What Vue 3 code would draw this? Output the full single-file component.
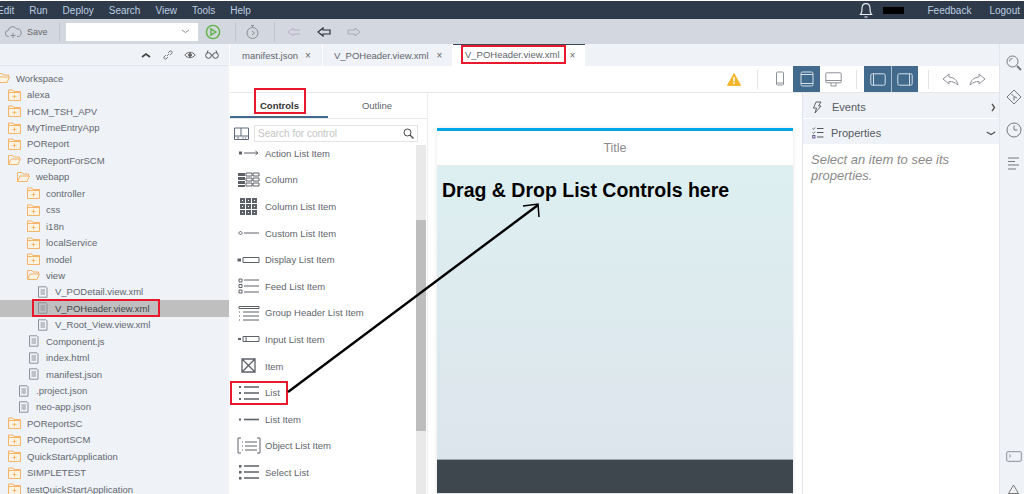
<template>
  <div class="ide">
    <div class="menubar">
      <span v-for="m in menus" :key="m" class="menu-item">{{ m }}</span>
      <div class="menu-right">
        <svg class="bell" width="14" height="16" viewBox="0 0 14 16" fill="none" stroke="#e8eef5" stroke-width="1.1">
          <path d="M1.5 12.5c1.5-1.5 1.5-3 1.5-6C3 3.5 4.8 1.6 7 1.6s4 1.9 4 4.9c0 3 0 4.5 1.5 6z" />
          <path d="M5.5 15h3" />
        </svg>
        <span class="redacted"></span>
        <span class="feedback">Feedback</span>
        <span class="logout">Logout</span>
      </div>
    </div>

    <div class="toolbar">
      <svg class="save-icon" width="17" height="14" viewBox="0 0 17 14" fill="none" stroke="#8a8f96">
        <path d="M4 11.5H3.5a3 3 0 0 1-.3-6A4.5 4.5 0 0 1 11.6 4a3.8 3.8 0 0 1 1.4 7.5h-1" />
        <path d="M8 8v5M5.5 10.5h5" />
      </svg>
      <span class="save-label">Save</span>
      <span class="tool-sep first"></span>
      <div class="run-select">
        <svg width="9" height="5" viewBox="0 0 9 5" fill="none" stroke="#8a8f96"><path d="M1 1l3.5 2.5L8 1" /></svg>
      </div>
      <svg class="run-btn" width="16" height="16" viewBox="0 0 16 16" fill="none" stroke="#5fb246" stroke-width="1.4">
        <circle cx="8" cy="8" r="6.6" />
        <path d="M6 4.8l4.8 3.2L6 11.2z" />
      </svg>
      <span class="tool-sep"></span>
      <svg class="timer" width="14" height="16" viewBox="0 0 14 16" fill="none" stroke="#8a8f96">
        <circle cx="6.5" cy="9" r="5.5" />
        <path d="M5 1.5h3M6.5 1.5v2M6 7l2.5 2-2.5 2" />
      </svg>
      <span class="tool-sep"></span>
      <svg class="nav a" width="14" height="10" viewBox="0 0 14 10" fill="none" stroke="#bcaecb"><path d="M6 1L1 5l5 4V7h7M6 1v2h7" /></svg>
      <svg class="nav b" width="14" height="10" viewBox="0 0 14 10" fill="none" stroke="#2b2f36" stroke-width="1.2"><path d="M6 1L1 5l5 4V7h7V3H6z" /></svg>
      <svg class="nav c" width="14" height="10" viewBox="0 0 14 10" fill="none" stroke="#a9adb5"><path d="M8 1l5 4-5 4V7H1V3h7z" /></svg>
    </div>

    <div class="main">
      <aside class="workspace">
        <div class="workspace-head">
          <svg width="10" height="6" viewBox="0 0 10 6"><path d="M1 5l4-3 4 3" fill="none" stroke="#444" stroke-width="1.6" /></svg>
          <svg class="gap-a" width="12" height="12" viewBox="0 0 12 12" fill="none" stroke="#777"><path d="M5 7l2-2M4 6L2 8a1.5 1.5 0 0 0 2 2l2-2M8 6l2-2a1.5 1.5 0 0 0-2-2L6 4" /></svg>
          <svg class="gap-b" width="12" height="8" viewBox="0 0 12 8" fill="none" stroke="#666"><path d="M.8 4C3.5.4 8.500.4 11.200 4 8.500 7.600 3.500 7.600.8 4z" /><circle cx="6" cy="4" r="1.500" fill="#666" /></svg>
          <svg class="gap-c" width="14" height="9" viewBox="0 0 14 9" fill="none" stroke="#555"><circle cx="3.500" cy="5.500" r="2.800" /><circle cx="10.500" cy="5.500" r="2.800" /><path d="M6.300 5h1.400M2 3l1-2.500M12 3l-1-2.500" /></svg>
        </div>
        <div class="tree">
          <div v-for="row in tree" :key="row.name + row.x" class="tree-row" :class="{ selected: row.selected }">
            <span class="tree-node" :class="{ marked: row.selected }" :style="{ marginLeft: row.x + 'px' }">
              <svg v-if="row.type === 'closed'" class="node-icon" width="13" height="12" viewBox="0 0 13 12" fill="#fdf3e3" stroke="#f5b469">
                <path d="M.5 11.500V1h4.500l1 1.500h6.500v9z" />
                <path d="M.5 3.500h12" fill="none" />
                <path d="M4.500 7.500h4M6.500 5.500v4" fill="none" stroke-width=".9" />
              </svg>
              <svg v-else-if="row.type === 'open'" class="node-icon" width="13" height="12" viewBox="0 0 13 12" fill="none" stroke="#f5b469">
                <path d="M.5 10.500V1.500h4.500l1 1.500h5.500v2" />
                <path d="M.5 10.500l2.500-5.500h9.500l-2.500 5.500z" fill="#fdf3e3" />
              </svg>
              <svg v-else class="node-icon" width="13" height="12" viewBox="0 0 13 12" fill="none" stroke="#8d9197">
                <path d="M2.500.8h7.500l1 1v9.400H2.500z" />
                <path d="M4.500 4h4.500M4.500 6h4.500M4.500 8h4.500" />
              </svg>
              <span class="node-name">{{ row.name }}</span>
            </span>
          </div>
        </div>
      </aside>

      <section class="editor">
        <div class="tabs">
          <div v-for="tab in tabs" :key="tab.id" class="tab" :class="{ active: tab.active }">
            <span class="tab-name" :class="{ marked: tab.active }">{{ tab.name }}</span>
            <span class="tab-close">×</span>
          </div>
        </div>

        <div class="layout-bar">
          <svg class="warn" width="14" height="13" viewBox="0 0 14 13">
            <path d="M7 .6l6.600 11.800H.4z" fill="#f2b62c" stroke="#f2b62c" stroke-linejoin="round" />
            <path d="M7 4v4.500M7 9.500v1.500" stroke="#fff" stroke-width="1.500" />
          </svg>
          <span class="bar-sep"></span>
          <div class="bar-btn">
            <svg width="10" height="16" viewBox="0 0 10 16" fill="none" stroke="#8d9197"><rect x="1.500" y="1" width="7" height="13" rx="1" /><path d="M1.500 12h7" /></svg>
          </div>
          <div class="bar-btn on">
            <svg width="14" height="16" viewBox="0 0 14 16" fill="none" stroke="#d4e0ea"><rect x="1" y="1" width="12" height="14" rx="1.500" /><path d="M1 3.500h12M1 12.500h12" /></svg>
          </div>
          <div class="bar-btn">
            <svg width="17" height="15" viewBox="0 0 17 15" fill="none" stroke="#8d9197"><rect x=".8" y=".8" width="15.400" height="10" rx="1" /><path d="M.8 8.500h15.400M6 11v3h5v-3" /></svg>
          </div>
          <span class="bar-sep"></span>
          <div class="bar-btn on">
            <svg width="16" height="13" viewBox="0 0 16 13" fill="none" stroke="#d4e0ea"><rect x=".8" y=".8" width="14.400" height="11.400" rx="1.500" /><path d="M3.500.8v11.400" /></svg>
          </div>
          <div class="bar-btn on">
            <svg width="16" height="13" viewBox="0 0 16 13" fill="none" stroke="#d4e0ea"><rect x=".8" y=".8" width="14.400" height="11.400" rx="1.500" /><path d="M12.500.8v11.400" /></svg>
          </div>
          <span class="bar-sep last"></span>
          <svg class="undo" width="17" height="13" viewBox="0 0 17 13" fill="none" stroke="#8d9197"><path d="M7 1L1 6l6 5V8.500c3.500 0 6 .8 9 3.500-.8-4.500-3.500-7.500-9-8z" /></svg>
          <svg class="redo" width="17" height="13" viewBox="0 0 17 13" fill="none" stroke="#8d9197"><path d="M10 1l6 5-6 5V8.500c-3.500 0-6 .8-9 3.500.8-4.500 3.500-7.500 9-8z" /></svg>
        </div>

        <div class="panes">
          <div class="palette">
            <div class="palette-tabs">
              <div class="palette-tab current"><span class="marked controls-mark">Controls</span></div>
              <div class="palette-tab">Outline</div>
            </div>
            <div class="search-row">
              <svg width="15" height="13" viewBox="0 0 15 13" fill="none" stroke="#5e6a78"><path d="M.5 9V1h6.500v8M7 1h7.500v8M.5 9h14v3.500H.5z" /><path d="M3 10l1 1.500L5 10M9 10v2M11 10l1 2" stroke-width=".7" /></svg>
              <div class="search-box">
                <span class="search-hint">Search for control</span>
                <svg width="11" height="11" viewBox="0 0 11 11" fill="none" stroke="#444"><circle cx="4.500" cy="4.500" r="3.500" /><path d="M7 7l3.500 3.500" stroke-width="1.300" /></svg>
              </div>
            </div>
            <div class="control-area">
              <ul class="control-list">
                <li v-for="c in controls" :key="c.name" class="control">
                  <span class="control-inner" :class="{ marked: c.name === 'List' }">
                    <svg class="control-icon" width="24" height="18" viewBox="0 0 24 18" fill="none" stroke="#5c6168">
                      <path :d="c.d" :stroke-width="c.w || 1" />
                      <path v-if="c.fill" :d="c.fill" fill="#5c6168" stroke="none" />
                    </svg>
                    <span class="control-name">{{ c.name }}</span>
                  </span>
                </li>
              </ul>
              <div class="scroll-track"><div class="scroll-thumb"></div></div>
            </div>
          </div>

          <div class="canvas">
            <div class="phone">
              <div class="phone-title">Title</div>
              <div class="phone-body">Drag &amp; Drop List Controls here</div>
              <div class="phone-foot"></div>
            </div>
          </div>

          <div class="props">
            <div class="prop-head">
              <svg width="10" height="13" viewBox="0 0 10 13" fill="none" stroke="#555"><path d="M4 1h5L6.500 5H9L3 12l1.500-5H1.500z" stroke-width=".9" /></svg>
              <span class="events-label">Events</span>
              <svg class="prop-arrow" width="5" height="9" viewBox="0 0 5 9" fill="none" stroke="#555" stroke-width="1.400"><path d="M1 .8l2.500 3.700L1 8.200" /></svg>
            </div>
            <div class="prop-head">
              <svg width="12" height="12" viewBox="0 0 12 12" fill="none" stroke="#555"><path d="M5 1.500h6.500M5 5.500h6.500M5 10h6.500" /><path d="M.5 1.500l1 1 1.500-2M.5 5.500l1 1 1.500-2" stroke-width=".8" /><rect x=".7" y="8.500" width="2.200" height="2.500" stroke="#6a5a8c" /></svg>
              <span class="properties-label">Properties</span>
              <svg class="prop-arrow" width="10" height="5" viewBox="0 0 10 5" fill="none" stroke="#555" stroke-width="1.400"><path d="M.8 1L5 3.500 9.200 1" /></svg>
            </div>
            <p class="prop-empty">Select an item to see its properties.</p>
          </div>
        </div>
      </section>

      <aside class="rail">
        <svg width="16" height="16" viewBox="0 0 16 16" fill="none" stroke="#777"><circle cx="6.500" cy="6.500" r="5.500" /><path d="M3.500 6.500a3 3 0 0 1 3-3" /><path d="M11 11l4 4" stroke-width="2" /></svg>
        <svg width="16" height="16" viewBox="0 0 16 16" fill="none" stroke="#777"><path d="M8 1l7 7-7 7-7-7z" /><path d="M5.500 5l2.500 2.500v4M8 7.500L11 9" /></svg>
        <svg width="16" height="16" viewBox="0 0 16 16" fill="none" stroke="#777"><circle cx="8" cy="8" r="7" /><path d="M8 3.500V8h3.500" /></svg>
        <svg class="rail-lines" width="13" height="13" viewBox="0 0 13 13" fill="none" stroke="#777"><path d="M1 1h11M1 4.500h7M1 8h11M1 12h8" /></svg>
        <svg class="rail-term" width="16" height="11" viewBox="0 0 16 11" fill="none" stroke="#8a8f96"><rect x=".7" y=".7" width="14.600" height="9.600" rx="1" /><path d="M3 3.500l2 1.500-2 1.500" stroke-width=".8" /></svg>
        <svg class="rail-warn" width="11" height="10" viewBox="0 0 11 10" fill="none" stroke="#777"><path d="M5.500 1l5 8.500H.5z" /></svg>
      </aside>
    </div>

    <svg class="annotation" width="1024" height="494" viewBox="0 0 1024 494" fill="none" stroke="#000">
      <path d="M288 392L538 205" stroke-width="2.400" />
      <path d="M523 206l15-2 1 13" stroke-width="1.500" />
    </svg>
  </div>
</template>

<script setup>
const menus = ['Edit', 'Run', 'Deploy', 'Search', 'View', 'Tools', 'Help']

const tree = [
  { name: 'Workspace', x: -3, type: 'open' },
  { name: 'alexa', x: 8, type: 'closed' },
  { name: 'HCM_TSH_APV', x: 8, type: 'closed' },
  { name: 'MyTimeEntryApp', x: 8, type: 'closed' },
  { name: 'POReport', x: 8, type: 'closed' },
  { name: 'POReportForSCM', x: 8, type: 'open' },
  { name: 'webapp', x: 17, type: 'open' },
  { name: 'controller', x: 27, type: 'closed' },
  { name: 'css', x: 27, type: 'closed' },
  { name: 'i18n', x: 27, type: 'closed' },
  { name: 'localService', x: 27, type: 'closed' },
  { name: 'model', x: 27, type: 'closed' },
  { name: 'view', x: 27, type: 'open' },
  { name: 'V_PODetail.view.xml', x: 36, type: 'file' },
  { name: 'V_POHeader.view.xml', x: 36, type: 'file', selected: true },
  { name: 'V_Root_View.view.xml', x: 36, type: 'file' },
  { name: 'Component.js', x: 27, type: 'file' },
  { name: 'index.html', x: 27, type: 'file' },
  { name: 'manifest.json', x: 27, type: 'file' },
  { name: '.project.json', x: 17, type: 'file' },
  { name: 'neo-app.json', x: 17, type: 'file' },
  { name: 'POReportSC', x: 8, type: 'closed' },
  { name: 'POReportSCM', x: 8, type: 'closed' },
  { name: 'QuickStartApplication', x: 8, type: 'closed' },
  { name: 'SIMPLETEST', x: 8, type: 'closed' },
  { name: 'testQuickStartApplication', x: 8, type: 'closed' }
]

const tabs = [
  { id: 1, name: 'manifest.json' },
  { id: 2, name: 'V_POHeader.view.xml' },
  { id: 3, name: 'V_POHeader.view.xml', active: true }
]

// icon paths sit in a 24x18 box
const controls = [
  { name: 'Action List Item', d: 'M7 9h14M18.500 7L21 9l-2.500 2', fill: 'M2 7.500h3v3H2z' },
  { name: 'Column', d: 'M9 2h6v3H9zM9 7h6v3H9zM9 12h6v3H9zM16 2h6v3h-6zM16 7h6v3h-6zM16 12h6v3h-6z', fill: 'M1 2h7v3H1zM1 6h7v3H1zM1 10h7v3H1zM1 14h7v2H1z' },
  { name: 'Column List Item', d: 'M4 2h3v3H4zM10 2h3v3h-3zM16 2h3v3h-3zM4 8h3v3H4zM10 8h3v3h-3zM16 8h3v3h-3zM4 14h3v3H4zM10 14h3v3h-3zM16 14h3v3h-3z', w: 2 },
  { name: 'Custom List Item', d: 'M7 9h15M3.500 7.500a1.500 1.500 0 1 0 .01 0z' },
  { name: 'Display List Item', d: 'M6 6.500h16v5H6z', fill: 'M.5 7.500h3.500v3H.5z' },
  { name: 'Feed List Item', d: 'M2 2h3v3H2zM2 7.500h3v3H2zM2 13h3v3H2zM7 3h15M7 9h15M7 15h15' },
  { name: 'Group Header List Item', d: 'M2 8h1M2 12h1M2 16h1M6 8h16M6 12h16M6 16h16M2 2.500h20v2H2z' },
  { name: 'Input List Item', d: 'M6 6.500h16v5H6zM9 6.500v5', fill: 'M1 8h3v2H1z' },
  { name: 'Item', d: 'M5 2h13v13H5zM5 2l13 13M18 2L5 15', w: 1.300 },
  { name: 'List', d: 'M7 3h15M7 9h15M7 15h15', w: 1.300, fill: 'M2 2h2v2H2zM2 8h2v2H2zM2 14h2v2H2z' },
  { name: 'List Item', d: 'M7 9.500h15', w: 1.600, fill: 'M2 8.500h2v2H2z' },
  { name: 'Object List Item', d: 'M4 1H1v15h3M20 1h3v15h-3M8 5h12M8 9h12M8 13h12M5 5h1M5 9h1M5 13h1' },
  { name: 'Select List', d: 'M7 3h15M7 9h15M7 15h15', w: 1.300, fill: 'M2 2h2.500v2.500H2zM2 8h2.500v2.500H2zM2 14h2.500v2.500H2z' }
]
</script>

<style>
body {
  margin: 0;
  overflow: hidden;
  background: #fff;
}
</style>

<style scoped>
.ide {
  position: relative;
  width: 1024px;
  height: 494px;
  display: flex;
  flex-direction: column;
  overflow: hidden;
  font-family: "Liberation Sans", Arial, sans-serif;
  color: #666;
}

.marked {
  outline: 2px solid #e8192c;
  outline-offset: -1px;
}

/* top menu */
.menubar {
  height: 18px;
  margin-top: 1px;
  flex: none;
  display: flex;
  align-items: center;
  gap: 15px;
  background: #2f3b4a;
  color: #bccde2;
  font-size: 10px;
}
.menu-item:first-child {
  margin-left: -3px;
}
.menu-right {
  margin-left: auto;
  display: flex;
  align-items: center;
}
.redacted {
  width: 21px;
  height: 7px;
  background: #000;
  margin-left: 10px;
}
.feedback {
  margin-left: 23px;
}
.logout {
  margin-left: 18px;
  margin-right: 4px;
}

/* toolbar */
.toolbar {
  height: 25px;
  flex: none;
  display: flex;
  align-items: center;
  background: #d3d7df;
}
.save-icon {
  margin-left: 5px;
}
.save-label {
  margin-left: 5px;
  font-size: 9px;
  color: #666;
}
.tool-sep {
  width: 1px;
  height: 20px;
  background: #c2c6ce;
  margin-left: 11px;
}
.run-select {
  width: 132px;
  height: 18px;
  margin-left: 6px;
  background: #fff;
  display: flex;
  align-items: center;
  justify-content: flex-end;
  padding-right: 8px;
  box-sizing: border-box;
}
.run-btn {
  margin-left: 7px;
}
.run-btn + .tool-sep {
  margin-left: 14px;
}
.timer {
  margin-left: 10px;
}
.timer + .tool-sep {
  margin-left: 14px;
}
.nav.a {
  margin-left: 12px;
}
.nav.b {
  margin-left: 16px;
}
.nav.c {
  margin-left: 16px;
}

.main {
  flex: 1;
  min-height: 0;
  display: flex;
}

/* workspace tree */
.workspace {
  width: 229px;
  flex: none;
  background: #eff2f7;
  margin-right: 1px;
  overflow: hidden;
}
.workspace-head {
  height: 21px;
  display: flex;
  align-items: center;
  padding-left: 141px;
  border-bottom: 1px solid #e3e6ec;
}
.gap-a {
  margin-left: 11px;
}
.gap-b {
  margin-left: 10px;
}
.gap-c {
  margin-left: 9px;
}
.tree {
  padding-top: 4px;
}
.tree-row {
  height: 16.450px;
  display: flex;
  align-items: center;
  font-size: 9.500px;
  white-space: nowrap;
}
.tree-row.selected {
  background: #bfbfbf;
}
.tree-node {
  display: inline-flex;
  align-items: center;
  height: 16px;
  padding: 0 1px 0 0;
  color: #626870;
}
.tree-node.marked {
  width: 126px;
  box-sizing: border-box;
  margin-left: 33px !important;
  padding-left: 3px;
  color: #3f444a;
}
.node-icon {
  flex: none;
}
.node-name {
  margin-left: 6px;
}

/* editor tabs */
.editor {
  width: 769px;
  flex: none;
  display: flex;
  flex-direction: column;
}
.tabs {
  height: 22px;
  flex: none;
  display: flex;
  background: #eff2f7;
}
.tab {
  width: 93px;
  box-sizing: border-box;
  display: flex;
  align-items: center;
  padding-left: 12px;
  font-size: 9.500px;
  border-right: 1px solid #fff;
  color: #5f656c;
}
.tab:nth-child(2) {
  width: 130px;
  padding-left: 11px;
}
.tab.active {
  width: 132px;
  background: #fff;
  border-top: 1px solid #3c4a5a;
  border-right: 0;
  padding-left: 9px;
}
.tab-name {
  line-height: 13px;
  padding: 2px 5px 2px 3px;
  margin-bottom: 2px;
}
.tab:not(.active) .tab-name {
  padding: 0;
  margin-bottom: 0;
}
.tab-close {
  margin-left: 7px;
  font-size: 10px;
  color: #666;
}
.tab:nth-child(2) .tab-close {
  margin-left: 8px;
}
.tab.active .tab-close {
  margin-left: 5px;
}

/* layout toolbar */
.layout-bar {
  height: 26px;
  flex: none;
  display: flex;
  align-items: center;
  justify-content: flex-end;
  padding-right: 13px;
  border-bottom: 1px solid #e7e7e7;
  background: #fff;
}
.warn {
  margin-right: 16px;
}
.bar-sep {
  width: 1px;
  height: 19px;
  background: #e3e3e3;
  margin: 0 7px 0 9px;
}
.warn + .bar-sep {
  margin: 0 8px 0 0;
}
.bar-sep.last {
  margin: 0 8px 0 10px;
}
.bar-btn {
  width: 27px;
  height: 26px;
  box-sizing: border-box;
  display: flex;
  align-items: center;
  justify-content: center;
}
.bar-btn.on {
  background: #426a8d;
}
.bar-btn.on + .bar-btn.on {
  border-left: 1px solid #a9bdcf;
}
.undo {
  margin-left: 5px;
}
.redo {
  margin-left: 10px;
}

.panes {
  flex: 1;
  min-height: 0;
  display: flex;
}

/* control palette */
.palette {
  width: 197px;
  flex: none;
  display: flex;
  flex-direction: column;
}
.palette-tabs {
  height: 25px;
  flex: none;
  display: flex;
  font-size: 9.500px;
  border-bottom: 1px solid #e9e9e9;
}
.palette-tab {
  width: 98px;
  display: flex;
  justify-content: center;
  color: #5f656c;
  padding-top: 7px;
  box-sizing: border-box;
}
.palette-tab.current {
  border-bottom: 2px solid #426a8d;
  color: #333;
  font-weight: bold;
}
.controls-mark {
  height: 24px;
  width: 50px;
  box-sizing: border-box;
  margin-top: -11px;
  margin-left: 1px;
  padding-top: 11px;
  text-align: center;
}
.search-row {
  height: 26px;
  flex: none;
  display: flex;
  align-items: center;
  padding-left: 4px;
  box-sizing: border-box;
  padding-top: 3px;
}
.search-box {
  width: 164px;
  height: 17px;
  margin-left: 5px;
  border: 1px solid #e3e3e3;
  box-sizing: border-box;
  display: flex;
  align-items: center;
  justify-content: space-between;
  padding: 0 3px 0 3px;
}
.search-hint {
  font-size: 10px;
  color: #c4c4c4;
}
.control-area {
  flex: 1;
  min-height: 0;
  display: flex;
  overflow: hidden;
}
.control-list {
  width: 186px;
  flex: none;
  margin: 0;
  padding: 0;
  list-style: none;
  margin-top: -5px;
}
.control {
  height: 26.600px;
  display: flex;
  align-items: center;
}
.control-inner {
  display: inline-flex;
  align-items: center;
  height: 22px;
  width: 56px;
  box-sizing: border-box;
  margin-left: 1px;
  white-space: nowrap;
}
.control-icon {
  flex: none;
  margin-left: 6px;
}
.control-name {
  margin-left: 4px;
  font-size: 9.500px;
  color: #5f656c;
}
.scroll-track {
  width: 10px;
  flex: none;
  background: #e9e9e9;
  margin-top: 0;
  padding-top: 75px;
}
.scroll-thumb {
  height: 211px;
  background: #bdbdbd;
}

/* phone canvas */
.canvas {
  width: 375px;
  flex: none;
  padding: 35px 9px 0 9px;
  box-sizing: border-box;
  display: flex;
  flex-direction: column;
  border-left: 1px solid #eee;
}
.phone {
  width: 356px;
  flex: 1;
  display: flex;
  flex-direction: column;
  border-top: 3px solid #00a5e6;
  box-shadow: 0 0 4px #e4e4e4;
}
.phone-title {
  height: 34px;
  flex: none;
  display: flex;
  align-items: center;
  justify-content: center;
  font-size: 12.500px;
  color: #8a8a8a;
  border-bottom: 1px solid #e8eced;
}
.phone-body {
  flex: 1;
  background: linear-gradient(#ddeff1, #dde5ec);
  color: #000;
  font-size: 19.500px;
  font-weight: bold;
  padding: 13px 0 0 5px;
}
.phone-foot {
  height: 35px;
  flex: none;
  background: #3e464e;
  border-top: 1px solid #9aa5ac;
  border-bottom: 1px solid #e0e3e6;
  box-sizing: border-box;
}

/* properties */
.props {
  width: 197px;
  flex: none;
  border-left: 1px solid #dfe4ed;
  box-sizing: border-box;
}
.prop-head {
  height: 26px;
  background: #eff2f7;
  border-bottom: 1px solid #fff;
  display: flex;
  align-items: center;
  padding: 3px 0 0 9px;
  box-sizing: border-box;
  font-size: 11px;
  color: #555b62;
}
.events-label {
  margin-left: 10px;
}
.properties-label {
  margin-left: 7px;
}
.prop-arrow {
  margin-left: auto;
  margin-right: 3px;
}
.prop-empty {
  margin: 7px 0 0 8px;
  width: 170px;
  font-size: 13px;
  line-height: 16px;
  font-style: italic;
  color: #8a8a8a;
}

/* right rail */
.rail {
  width: 25px;
  flex: none;
  background: #eff2f7;
  border-left: 1px solid #e3e6ec;
  box-sizing: border-box;
  display: flex;
  flex-direction: column;
  align-items: center;
  gap: 17.500px;
  padding: 11px 0 0 3px;
}
.rail svg {
  flex: none;
}
.rail-lines {
  margin-top: 1px;
}
.rail-term {
  margin-top: 264px;
}
.rail-warn {
  margin-top: 4px;
}

/* hand drawn arrow on top of the screenshot */
.annotation {
  position: absolute;
  left: 0;
  top: 0;
  pointer-events: none;
}
</style>
